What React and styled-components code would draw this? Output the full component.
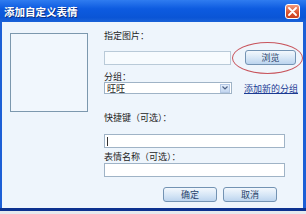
import React from 'react'
import styled, { createGlobalStyle } from 'styled-components'

const Global = createGlobalStyle`
  html, body {
    margin: 0;
    padding: 0;
    background: #e6e9ee;
    font-family: "Noto Sans CJK SC", "Noto Sans", sans-serif;
  }
`

const Window = styled.div`
  width: 306px;
  height: 211px;
  box-sizing: border-box;
  display: flex;
  flex-direction: column;
  background: #1c5fd6;
  border-bottom: 3px solid #0c318f;
`

const TitleBar = styled.div`
  height: 22px;
  flex: 0 0 22px;
  display: flex;
  align-items: center;
  justify-content: space-between;
  padding: 0 6px 0 4px;
  background: linear-gradient(#2f7cf0 0%, #0d5be0 40%, #0a55d6 80%, #1a62d8 100%);
`

const Title = styled.div`
  color: #fff;
  font-size: 10.5px;
  font-weight: 700;
  letter-spacing: 0;
  text-shadow: 1px 1px 0 #0a2f80;
`

const CloseButton = styled.div`
  width: 15px;
  height: 15px;
  box-sizing: border-box;
  border: 1px solid #fff;
  border-radius: 3px;
  background: linear-gradient(#f39a7c, #d9522f 60%, #c9401f);
  display: flex;
  align-items: center;
  justify-content: center;
`

const Body = styled.div`
  flex: 1;
  margin: 0 3px 0 2px;
  background: #eef5fc;
  display: flex;
  padding-left: 8px;
`

const Preview = styled.div`
  width: 78px;
  height: 79px;
  box-sizing: border-box;
  margin-top: 11px;
  border: 1px solid #7c98ae;
  background: #f1f7fd;
`

const Form = styled.div`
  margin-left: 16px;
  display: flex;
  flex-direction: column;
`

const Label = styled.div`
  margin-top: ${p => p.$top}px;
  font-size: 9px;
  line-height: 11px;
  height: 11px;
  color: #1d1d1d;
  white-space: nowrap;
`

const Row = styled.div`
  margin-top: ${p => p.$top || 0}px;
  display: flex;
  align-items: ${p => p.$align || 'center'};
`

const TextBox = styled.div`
  width: ${p => p.$w}px;
  height: 14px;
  box-sizing: border-box;
  margin-top: ${p => p.$top || 0}px;
  border: 1px solid ${p => p.$soft ? '#b9cad8' : '#9fb3c6'};
  background: ${p => p.$soft ? '#f7fbfe' : '#fff'};
  display: flex;
  align-items: center;
`

const Caret = styled.div`
  width: 1px;
  height: 9px;
  margin-left: 2px;
  background: #333;
`

const Select = styled.div`
  width: 128px;
  height: 12px;
  box-sizing: border-box;
  border: 1px solid #9fb3c6;
  background: #fff;
  display: flex;
  align-items: center;
  justify-content: space-between;
  font-size: 9px;
  color: #1d1d1d;
  padding-left: 2px;
`

const Arrow = styled.div`
  width: 10px;
  height: 9px;
  margin-right: 1px;
  background: linear-gradient(#e4eefb, #c3d6f0);
  border: 1px solid #b4c8e4;
  box-sizing: border-box;
  display: flex;
  align-items: center;
  justify-content: center;
`

const Link = styled.a`
  margin-left: 12px;
  font-size: 9px;
  line-height: 11px;
  color: #1b3b93;
  text-decoration: underline;
  white-space: nowrap;
`

const BrowseWrap = styled.div`
  position: relative;
  margin-left: 14px;
`

const Ellipse = styled.div`
  position: absolute;
  left: -13px;
  top: -8px;
  width: 71px;
  height: 32px;
  box-sizing: border-box;
  border: 1px solid #c8545c;
  border-radius: 50%;
  pointer-events: none;
`

const Button = styled.div`
  width: ${p => p.$w}px;
  height: ${p => p.$h || 15}px;
  box-sizing: border-box;
  border: 1px solid #7393b3;
  border-radius: 3px;
  background: linear-gradient(#f3f8fd, #d6e6f6 55%, #bcd4ee);
  color: #27426b;
  font-size: 9px;
  display: flex;
  align-items: center;
  justify-content: center;
`

const Buttons = styled.div`
  margin-top: 10px;
  width: 181px;
  padding-right: 8px;
  box-sizing: border-box;
  display: flex;
  justify-content: flex-end;
  gap: 6px;
`

export default function App() {
  return (
    <>
      <Global />
      <Window>
        <TitleBar>
          <Title>添加自定义表情</Title>
          <CloseButton>
            <svg width="9" height="9" viewBox="0 0 9 9">
              <path d="M1 1 L8 8 M8 1 L1 8" stroke="#fff" strokeWidth="1.8" strokeLinecap="round" />
            </svg>
          </CloseButton>
        </TitleBar>
        <Body>
          <Preview />
          <Form>
            <Label $top={8}>指定图片：</Label>
            <Row $top={8}>
              <TextBox $w={127} $soft $top={2} />
              <BrowseWrap>
                <Button $w={51}>浏览</Button>
                <Ellipse />
              </BrowseWrap>
            </Row>
            <Label $top={6}>分组：</Label>
            <Row>
              <Select>
                旺旺
                <Arrow>
                  <svg width="6" height="4" viewBox="0 0 6 4">
                    <path d="M0.5 0.5 L3 3 L5.5 0.5" stroke="#4d6185" strokeWidth="1.2" fill="none" />
                  </svg>
                </Arrow>
              </Select>
              <Link>添加新的分组</Link>
            </Row>
            <Label $top={18}>快捷键（可选）：</Label>
            <TextBox $w={181} $top={11}>
              <Caret />
            </TextBox>
            <Label $top={3}>表情名称（可选）：</Label>
            <TextBox $w={181} $top={1} />
            <Buttons>
              <Button $w={54}>确定</Button>
              <Button $w={54}>取消</Button>
            </Buttons>
          </Form>
        </Body>
      </Window>
    </>
  )
}
